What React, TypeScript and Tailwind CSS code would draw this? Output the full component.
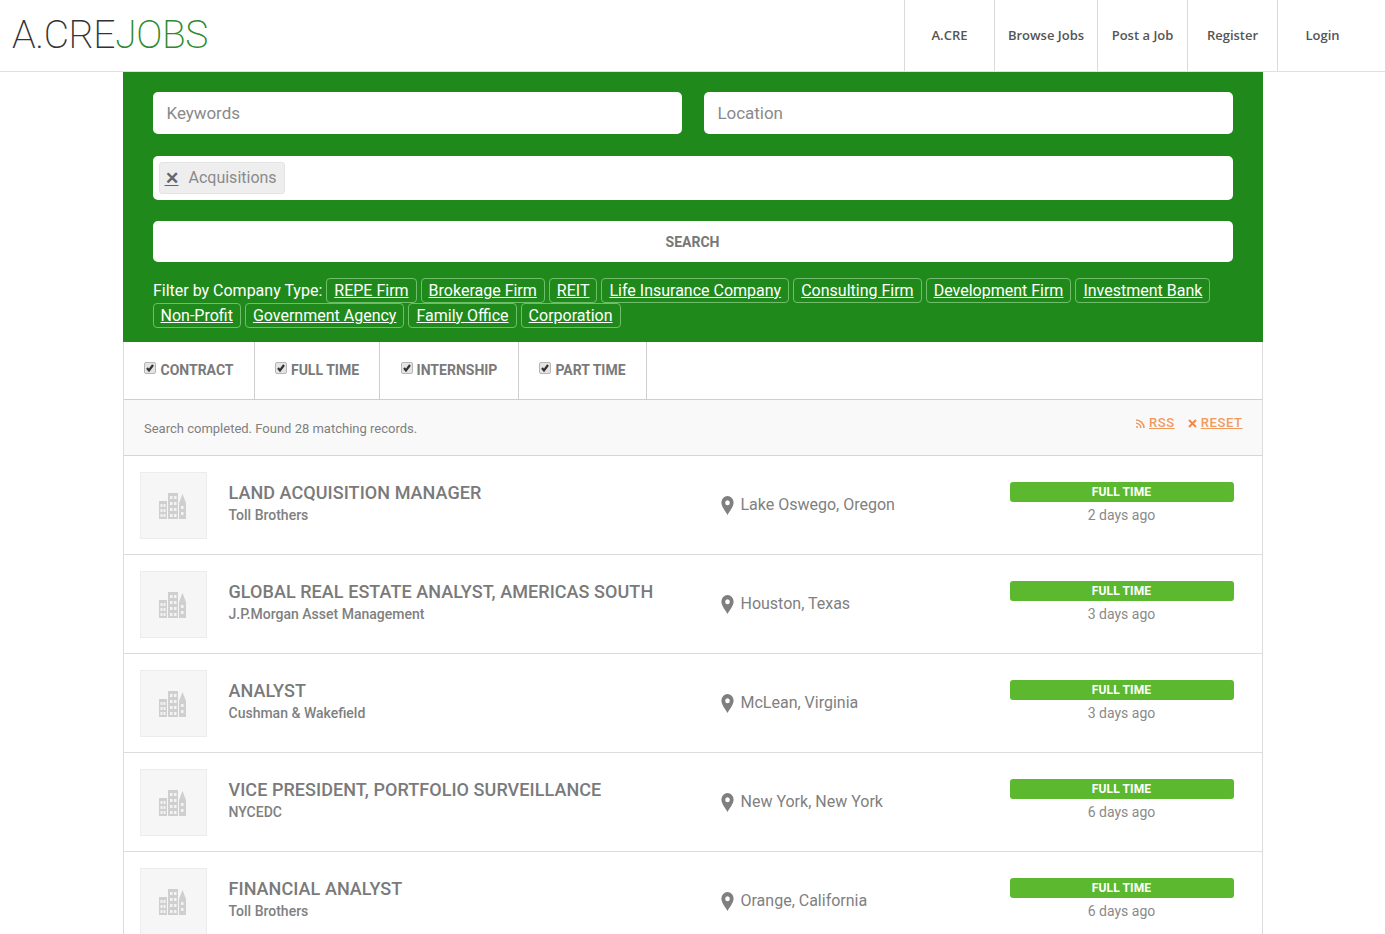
import React from "react";

const navItems = [
  { label: "A.CRE", w: "w-[90px]" },
  { label: "Browse Jobs", w: "w-[103px]" },
  { label: "Post a Job", w: "w-[90px]" },
  { label: "Register", w: "w-[90px]" },
  { label: "Login", w: "w-[90px]" },
];

const companyTypesOne = [
  "REPE Firm",
  "Brokerage Firm",
  "REIT",
  "Life Insurance Company",
  "Consulting Firm",
  "Development Firm",
  "Investment Bank",
];

const companyTypesTwo = ["Non-Profit", "Government Agency", "Family Office", "Corporation"];

const jobTypes = [
  { label: "CONTRACT", w: "w-[131px]" },
  { label: "FULL TIME", w: "w-[125px]" },
  { label: "INTERNSHIP", w: "w-[139px]" },
  { label: "PART TIME", w: "w-[128px]" },
];

const jobs = [
  { title: "LAND ACQUISITION MANAGER", company: "Toll Brothers", location: "Lake Oswego, Oregon", age: "2 days ago" },
  { title: "GLOBAL REAL ESTATE ANALYST, AMERICAS SOUTH", company: "J.P.Morgan Asset Management", location: "Houston, Texas", age: "3 days ago" },
  { title: "ANALYST", company: "Cushman & Wakefield", location: "McLean, Virginia", age: "3 days ago" },
  { title: "VICE PRESIDENT, PORTFOLIO SURVEILLANCE", company: "NYCEDC", location: "New York, New York", age: "6 days ago" },
  { title: "FINANCIAL ANALYST", company: "Toll Brothers", location: "Orange, California", age: "6 days ago" },
];

function Tag({ label }: { label: string }) {
  return (
    <a className="inline-block h-[25px] rounded-[4px] border border-[#6fbf6a] px-[7px] text-[16px] leading-[23px] text-white underline">
      {label}
    </a>
  );
}

function BuildingIcon() {
  return (
    <svg width="30" height="28" viewBox="0 0 30 28" fill="#cfcfcf">
      <path d="M1 9h8v18H1zM10 1h10v26H10zM21 27V11l3.500-9 3.500 9v16z" />
      <g fill="#f3f3f3">
        <rect x="2.500" y="12" width="2" height="3" />
        <rect x="5.500" y="12" width="2" height="3" />
        <rect x="2.500" y="17" width="2" height="3" />
        <rect x="5.500" y="17" width="2" height="3" />
        <rect x="2.500" y="22" width="2" height="3" />
        <rect x="5.500" y="22" width="2" height="3" />
        <rect x="12" y="4" width="2.500" height="3" />
        <rect x="16" y="4" width="2.500" height="3" />
        <rect x="12" y="10" width="2.500" height="3" />
        <rect x="16" y="10" width="2.500" height="3" />
        <rect x="12" y="16" width="2.500" height="3" />
        <rect x="16" y="16" width="2.500" height="3" />
        <rect x="12" y="22" width="2.500" height="3" />
        <rect x="16" y="22" width="2.500" height="3" />
        <rect x="23" y="14" width="2.500" height="3" />
        <rect x="23" y="20" width="2.500" height="3" />
      </g>
    </svg>
  );
}

function PinIcon() {
  return (
    <svg width="13" height="19" viewBox="0 0 14 19" fill="#7f7f7f" preserveAspectRatio="none">
      <path fillRule="evenodd" d="M7 0a6.6 6.6 0 0 1 6.6 6.6c0 4.300-4.400 8.600-6.600 12.400C4.800 15.200.4 10.900.4 6.600A6.600 6.600 0 0 1 7 0zm0 4.200a2.500 2.500 0 1 0 0 5 2.500 2.500 0 0 0 0-5z" />
    </svg>
  );
}

function Checkbox() {
  return (
    <span className="flex h-[12px] w-[12px] items-center justify-center rounded-[2px] border border-[#b5b5b5] bg-[#e4e4e4]">
      <svg width="10" height="10" viewBox="0 0 10 10" fill="none" stroke="#333" strokeWidth="2.200">
        <path d="M2 5l2 2.500L8 2" />
      </svg>
    </span>
  );
}

function JobRow({ job }: { job: (typeof jobs)[number] }) {
  return (
    <div className="flex h-[99px] items-start border-b border-[#dcdcdc] pl-4">
      <div className="mt-4 flex h-[67px] w-[67px] shrink-0 items-center justify-center border border-[#ececec] bg-[#f6f6f6]">
        <BuildingIcon />
      </div>
      <div className="ml-[22px] mt-[26px] w-[492px] shrink-0">
        <div className="text-[18px] font-medium leading-[22px] tracking-[0.06px] text-[#7a7a7a]">{job.title}</div>
        <div className="mt-[1px] text-[14px] font-medium leading-[20px] text-[#808080]">{job.company}</div>
      </div>
      <div className="mt-[39px] flex w-[289px] shrink-0 items-center">
        <PinIcon />
        <span className="ml-[7px] text-[16px] leading-[20px] text-[#808080]">{job.location}</span>
      </div>
      <div className="mt-[26px] w-[224px] shrink-0 text-center">
        <div className="h-[20px] rounded-[3px] bg-[#5cb92f] text-[12px] font-bold leading-[20px] tracking-[0.1px] text-white">
          FULL TIME
        </div>
        <div className="mt-[3px] text-[14px] leading-[20px] text-[#8a8a8a]">{job.age}</div>
      </div>
    </div>
  );
}

export default function App() {
  return (
    <div className="h-[934px] overflow-hidden bg-white font-['Roboto',sans-serif]">
      <header className="flex h-[72px] items-stretch justify-between border-b border-[#e0e0e0] pr-[18px]">
        <div className="ml-[12px] mt-[12px] flex text-[39px] font-extralight leading-[46px] tracking-[-0.4px]">
          <span className="text-[#333333]">A.CRE</span>
          <span className="text-[#2f8a2f]">JOBS</span>
        </div>
        <nav className="flex">
          {navItems.map((item) => (
            <a
              key={item.label}
              className={`${item.w} flex items-center justify-center border-l border-[#dadada] font-['Open_Sans',sans-serif] text-[13px] font-semibold text-[#555555]`}
            >
              {item.label}
            </a>
          ))}
        </nav>
      </header>

      <main className="mx-auto w-[1140px]">
        <section className="h-[270px] bg-[#1f8a1b] px-[30px] pt-5">
          <div className="flex gap-[22px]">
            <div className="flex h-[42px] flex-1 items-center rounded-[5px] bg-white pl-[14px] pt-[1px] text-[17px] tracking-[-0.05px] text-[#8a8a8a]">
              Keywords
            </div>
            <div className="flex h-[42px] flex-1 items-center rounded-[5px] bg-white pl-[14px] pt-[1px] text-[17px] tracking-[-0.05px] text-[#8a8a8a]">
              Location
            </div>
          </div>
          <div className="mt-[22px] flex h-[44px] items-center rounded-[5px] bg-white px-[6px]">
            <span className="flex h-[32px] items-center rounded-[3px] border border-[#e3e3e3] bg-[#eeeeee] pl-[5px] pr-[7px] text-[16px] text-[#8a8a8a]">
              <span className="mr-[10px] text-[17px] font-bold leading-[18px] text-[#666666] underline">✕</span>
              Acquisitions
            </span>
          </div>
          <div className="mt-[21px] flex h-[41px] items-center justify-center rounded-[5px] bg-white pt-[2px] text-[14px] font-bold text-[#777777]">
            SEARCH
          </div>
          <div className="mt-[16px] flex items-center gap-[4px] text-[16px] text-white">
            <span className="ml-[0.4px]">Filter by Company Type:</span>
            {companyTypesOne.map((t) => (
              <Tag key={t} label={t} />
            ))}
          </div>
          <div className="flex gap-[4px]">
            {companyTypesTwo.map((t) => (
              <Tag key={t} label={t} />
            ))}
          </div>
        </section>

        <div className="border-x border-[#dcdcdc]">
          <div className="flex h-[58px] border-b border-[#cfcfcf]">
            {jobTypes.map((j) => (
              <label
                key={j.label}
                className={`${j.w} flex items-center justify-center gap-[4px] border-r border-[#cfcfcf] pl-[1px] text-[14px] font-bold text-[#7a7a7a]`}
              >
                <span className="-mt-[5px]">
                  <Checkbox />
                </span>
                {j.label}
              </label>
            ))}
          </div>
          <div className="flex h-[56px] items-center justify-between border-b border-[#d5d5d5] bg-[#f9f9f9] pl-5 pr-[19px]">
            <span className="ml-[0.500px] mt-[2px] text-[13px] text-[#808080]">Search completed. Found 28 matching records.</span>
            <div className="-mt-[9px] flex gap-[13px] text-[13px] font-medium tracking-[0.6px] text-[#ef9a5f]">
              <span className="flex items-center gap-[4px]">
                <svg width="9" height="9" viewBox="0 0 9 9" fill="none" stroke="#ef9a5f" strokeWidth="1.600">
                  <path d="M0 1a8 8 0 0 1 8 8M0 4.200a4.800 4.800 0 0 1 4.800 4.800" />
                  <circle cx="1" cy="8" r="1" fill="#ef9a5f" stroke="none" />
                </svg>
                <span className="underline">RSS</span>
              </span>
              <span className="flex items-center gap-[4px]">
                <svg width="9" height="9" viewBox="0 0 9 9" fill="none" stroke="#ef8a4f" strokeWidth="2">
                  <path d="M1 1l7 7M8 1L1 8" />
                </svg>
                <span className="underline">RESET</span>
              </span>
            </div>
          </div>
          {jobs.map((job) => (
            <JobRow key={job.title} job={job} />
          ))}
        </div>
      </main>
    </div>
  );
}
